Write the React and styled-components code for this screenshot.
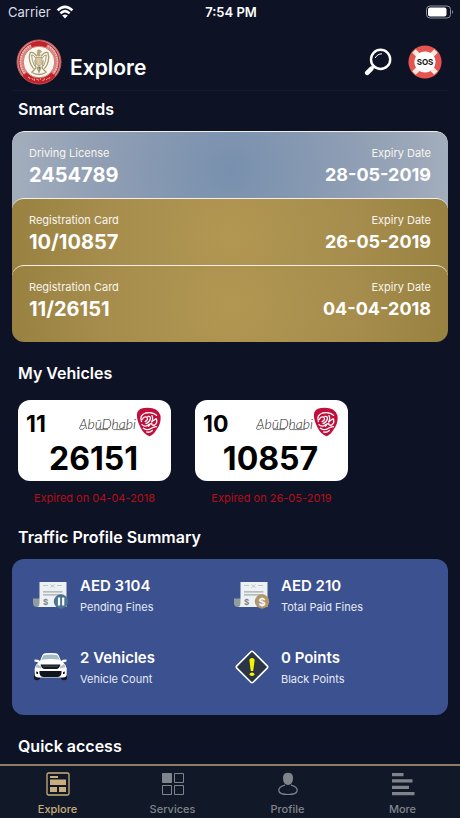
import React, { useState } from 'react'
import styled, { createGlobalStyle } from 'styled-components';

const cards = [
  { type: "Driving License", number: "2454789", expiry: "28-05-2019", color: "silver" },
  { type: "Registration Card", number: "10/10857", expiry: "26-05-2019", color: "gold" },
  { type: "Registration Card", number: "11/26151", expiry: "04-04-2018", color: "gold" },
];

const vehicles = [
  { code: "11", number: "26151", expired: "04-04-2018" },
  { code: "10", number: "10857", expired: "26-05-2019" },
];

const WifiIcon = () => (
  <svg width="18" height="14" viewBox="0 0 18 14" fill="none" stroke="#fff" strokeWidth="2.6">
    <path d="M1.6 5.4Q9-1.6 16.4 5.4" />
    <path d="M4.4 8.4Q9 4 13.6 8.4" />
    <path d="M9 13.4 6.2 10.6Q9 8.2 11.8 10.6Z" fill="#fff" stroke="none" />
  </svg>
)

const BatteryIcon = () => (
  <svg width="28" height="14" viewBox="0 0 28 14">
    <rect x="0.5" y="1" width="24" height="12" rx="3.5" fill="none" stroke="#8d909b" />
    <rect x="2" y="2.5" width="18.5" height="9" rx="2" fill="#fff" />
    <path d="M26 5q2 2 0 4z" fill="#8d909b" />
  </svg>
)

const Crest = () => (
  <svg width="46" height="46" viewBox="0 0 46 46" fill="none">
    <circle cx="23" cy="23" r="22" fill="#d98584" stroke="#b7605b" />
    <circle cx="23" cy="23" r="20" stroke="#b9292f" strokeWidth="1" />
    <circle cx="23" cy="23" r="18.5" stroke="#f0c3bf" strokeWidth="1.6" strokeDasharray="1.4 1" />
    <path d="M14 4.6Q23-.6 32 4.6L29.5 9.6Q23 6.5 16.5 9.6Z" fill="#c3222a" />
    <path d="M8.6 35.2A19.3 19.3 0 0 0 37.4 35.2" stroke="#c3222a" strokeWidth="6" />
    <path d="M12 38.4q1.6-.6 2 1.6m1.8-.8 1.6 2m1-1.8v2.4m2-1.4q2-1 2 1.2m2-.8v-1.6m2 2.2q2 .4 2-2m1.6 1.4 1.6-1.2m1 .4 1.4-2" stroke="#f1bfb6" strokeWidth=".9" />
    <circle cx="23" cy="23" r="15.8" fill="#fbf7ee" stroke="#cd7770" />
    <g stroke="#a89a70" strokeLinecap="round">
      <path d="M21.5 11.5q1.5-1.6 3 0l1.2 1.5-2 .4.4 3-1.2 1-1.4-1-.2-3z" fill="#b5a67a" strokeWidth=".6" />
      <path d="M20.8 17q-3.6-4.8-6.6-3.4-1.6 3.8-.4 8.8.8 3.6 3.4 6.8M25.2 17q3.6-4.8 6.6-3.4 1.6 3.8.4 8.8-.8 3.6-3.4 6.8" strokeWidth="1.3" />
      <path d="M19.8 19q-2.2-3.4-4.2-3 .2 6 3 11M26.2 19q2.2-3.4 4.2-3-.2 6-3 11M18.8 21.5l1 8M27.2 21.5l-1 8" strokeWidth="1" />
      <path d="M20 18.5h6v6q-3 4.6-6 0z" fill="#d5c9a5" strokeWidth=".8" />
      <path d="M21 28 23 33l2-5M19.4 29.5l-3.6 3.7M26.6 29.5l3.6 3.7M17 34q6 3 12 0" strokeWidth="1.3" />
      <path d="M22 27.4h2.2l-1 4.4z" fill="#6f7351" stroke="none" />
    </g>
  </svg>
)

const SearchIcon = () => (
  <svg width="28" height="28" viewBox="0 0 28 28" fill="none" stroke="#fff" strokeLinecap="round">
    <circle cx="16.6" cy="11.4" r="9.6" strokeWidth="2.4" />
    <path d="M9.6 18.4 7.8 20.2" strokeWidth="2.4" />
    <path d="M7.4 20.6 3.2 24.8" strokeWidth="4.6" />
    <path d="M11.4 9.6Q13.4 5.8 17.6 5.8" strokeWidth="1" />
  </svg>
)

const SosIcon = () => (
  <svg width="34" height="34" viewBox="0 0 34 34">
    <circle cx="17" cy="17" r="16.6" fill="#e6544f" />
    <path d="M6 6 28 28M28 6 6 28" stroke="#fbe9e0" strokeWidth="5" />
    <circle cx="17" cy="17" r="10.6" fill="#fff" />
    <text x="17" y="20" textAnchor="middle" fontFamily="Inter, sans-serif" fontWeight="700" fontSize="8" fill="#111">SOS</text>
  </svg>
)

const AbuDhabiLogo = () => (
  <svg width="82" height="30" viewBox="0 0 82 30" fill="none">
    <text x="0" y="22" fontFamily="Lato, sans-serif" fontStyle="italic" fontWeight="300" fontSize="14" fill="#222">AbūDhabi</text>
    <path d="M1 22.5q3 .4 5-2M17 22.6h12M34 22.6h15" stroke="#555" strokeWidth=".8" />
    <path d="M58.4 5.2Q60 .8 69 .8q9.600 0 12.400 7.400 1.200 7.600-3.600 14-3.400 5.800-7.200 7-5.600-1.600-9.200-9Q56.600 10.600 58.400 5.200Z" fill="#c00f3c" />
    <g stroke="#fff" strokeWidth="1.300" strokeLinecap="round">
      <path d="M62.400 14.600Q60.200 8 66.600 6q7-1.600 11 2.400M63.200 12.500q1.600-3.600 4.600-2.300 2 2.400-1.600 4.400M69 9.400q2.600-.6 2.400 2.200-.6 3.400-4.400 5M73 8.600q1.600 4-.6 6.400l4.600-3.200M77.400 12q1.400 4-2 6.200-3.400.4-2.600-2.200M63 17.600q3.400 3.400 7.200-.4M64.400 21.200q4 2.800 8 0 2.800-1.800 5-1.600M67.600 25q2.800 1 5.800-1.600M69.600 19.200l1.800-2.600" />
    </g>
  </svg>
)

const FinesIcon = ({ paid }) => (
  <svg width="36" height="30" viewBox="0 0 36 30" fill="none">
    <path d="M0 18.500h8V27H4q-4 0-4-4z" fill="#929d9f" />
    <path d="M6.500 2h27v25h-29q2-1 2-4z" fill="#eef1f3" />
    <path d="M10 5.500h5M24 5.500h5M17.500 4.500l4 3m0-3-4 3" stroke="#bfc6c9" />
    <path d="M10 11.800h19.500M10 14.800h19.500" stroke="#a4aaad" strokeWidth="1.200" />
    <text x="10" y="25" fontFamily="Inter, sans-serif" fontWeight="700" fontSize="8" fill="#7b8489">$</text>
    <circle cx="28" cy="21.500" r="7.200" fill={paid ? "#b1966b" : "#4b7490"} />
    {paid
      ? <text x="28" y="25.500" textAnchor="middle" fontFamily="Inter, sans-serif" fontWeight="700" fontSize="11" fill="#fff">$</text>
      : <path d="M26 17.500v8M30.200 17.500v8" stroke="#fff" strokeWidth="2.200" />}
  </svg>
)

const CarIcon = () => (
  <svg width="36" height="30" viewBox="0 0 36 30">
    <path d="M1 21h6v6q-3 2.400-6 0zM28 21h6v6q-3 2.400-6 0z" fill="#11161d" />
    <path d="M1.500 7.500 5 7.800 7 9 9.200 3.500Q10 1.500 12 1.300q5.500-.8 11 0 2 .2 2.800 2.200L28 9l2-1.200 3.500-.3v2l-3.400 1q3.400 2.500 3.600 6v6q0 3-4 3h-24q-4 0-4-3v-6q.2-3.500 3.600-6l-3.800-1z" fill="#fff" />
    <path d="M8.400 7.700 10.500 3.300q7-1.600 14 0l2.100 4.400q-9-1.200-18.200 0z" fill="#a6bcc5" />
    <path d="M2.200 15.200 4 12l4 2.500v2zM32.800 15.200 31 12l-4 2.500v2z" fill="#b9c0c5" />
    <path d="M7.500 12.500h20q-1.200 4.200-3.500 4.500H11q-2.300-.3-3.500-4.500z" fill="#151b22" />
    <path d="M6.500 19h22v2.500q-1 3.500-4 3.500h-14q-3 0-4-3.500zM3 19.500l2 .5v2H3.500zM32 19.500l-2 .5v2h1.500z" fill="#11161d" />
    <path d="M10 14.200h15" stroke="#59616a" strokeWidth=".7" />
  </svg>
)

const WarningIcon = () => (
  <svg width="36" height="36" viewBox="0 0 36 36">
    <rect x="6.500" y="6.500" width="23" height="23" rx="1.500" transform="rotate(45 18 18)" fill="#2c3546" stroke="#fff" strokeWidth="1.600" />
    <path d="M15.400 11.500q0-2.500 2.600-2.500t2.600 2.500L19.200 22h-2.400z" fill="#f6f500" />
    <ellipse cx="18" cy="25.200" rx="2.400" ry="1.800" fill="#f6f500" />
  </svg>
)

const ExploreIcon = () => (
  <svg width="24" height="24" viewBox="0 0 24 24" fill="currentColor">
    <rect x="1" y="1" width="22" height="22" rx="1.500" fill="none" stroke="currentColor" strokeWidth="1.300" />
    <path d="M4 4h8v2H4zM4 7.500h16V13H4zM4 15h7v5H4zM13 15h7v5h-7z" />
  </svg>
)

const ServicesIcon = () => (
  <svg width="24" height="24" viewBox="0 0 24 24" fill="none" stroke="currentColor">
    <path d="M1.500 1.500h9v9h-9z" fill="currentColor" />
    <path d="M13.500 1.500h9v9h-9zM1.500 13.500h9v9h-9zM13.500 13.500h9v9h-9z" />
  </svg>
)

const ProfileIcon = () => (
  <svg width="24" height="24" viewBox="0 0 24 24" fill="none" stroke="currentColor">
    <path d="M12 .8q5 0 5 5.200 0 7-5 7T7 6Q7 .8 12 .8z" fill="currentColor" stroke="none" />
    <path d="M9 13.200Q3 14.600 2.800 18.400 3 22.500 12 22.500t9.200-4.100Q21 14.600 15 13.200" strokeWidth="1.200" />
  </svg>
)

const MoreIcon = () => (
  <svg width="24" height="24" viewBox="0 0 24 24" fill="currentColor">
    <path d="M1 1h11.500v3.200H1zM1 7.300h20.500v3.200H1zM1 13.700h17v3.200H1zM1 20h22.500v3.200H1z" />
  </svg>
)

const summary = [
  { icon: <FinesIcon />, value: "AED 3104", label: "Pending Fines" },
  { icon: <FinesIcon paid />, value: "AED 210", label: "Total Paid Fines" },
  { icon: <CarIcon />, value: "2 Vehicles", label: "Vehicle Count" },
  { icon: <WarningIcon />, value: "0 Points", label: "Black Points" },
];

const tabs = [
  { name: "Explore", icon: <ExploreIcon /> },
  { name: "Services", icon: <ServicesIcon /> },
  { name: "Profile", icon: <ProfileIcon /> },
  { name: "More", icon: <MoreIcon /> },
];

const App = () => {

  const [activeTab, setActiveTab] = useState("Explore");

  return (
    <Page>
      <GlobalStyle />
      <StatusBar>
        <div className='carrier'>Carrier <WifiIcon /></div>
        <strong>7:54 PM</strong>
        <div className='battery'><BatteryIcon /></div>
      </StatusBar>
      <Header>
        <Crest />
        <h1>Explore</h1>
        <IconButton aria-label='Search'><SearchIcon /></IconButton>
        <IconButton aria-label='SOS'><SosIcon /></IconButton>
      </Header>
      <main>
        <SectionTitle>Smart Cards</SectionTitle>
        <CardStack>
          {cards.map((card) => (
            <SmartCard key={card.number} $color={card.color}>
              <div>
                <CardLabel>{card.type}</CardLabel>
                <CardNumber>{card.number}</CardNumber>
              </div>
              <div className='expiry'>
                <CardLabel>Expiry Date</CardLabel>
                <CardDate>{card.expiry}</CardDate>
              </div>
            </SmartCard>
          ))}
        </CardStack>
        <SectionTitle>My Vehicles</SectionTitle>
        <VehicleList>
          {vehicles.map((vehicle) => (
            <Vehicle key={vehicle.number}>
              <Plate>
                <div className='plate-top'>
                  <span>{vehicle.code}</span>
                  <AbuDhabiLogo />
                </div>
                <div className='plate-number'>{vehicle.number}</div>
              </Plate>
              <Expired>Expired on {vehicle.expired}</Expired>
            </Vehicle>
          ))}
        </VehicleList>
        <SectionTitle>Traffic Profile Summary</SectionTitle>
        <SummaryPanel>
          {summary.map((item) => (
            <SummaryItem key={item.label}>
              <div className='icon'>{item.icon}</div>
              <div>
                <div className='value'>{item.value}</div>
                <div className='label'>{item.label}</div>
              </div>
            </SummaryItem>
          ))}
        </SummaryPanel>
        <SectionTitle>Quick access</SectionTitle>
      </main>
      <TabBar>
        {tabs.map((tab) => (
          <Tab key={tab.name} $active={activeTab === tab.name} onClick={() => setActiveTab(tab.name)}>
            {tab.icon}
            {tab.name}
          </Tab>
        ))}
      </TabBar>
    </Page>
  )
}

const GlobalStyle = createGlobalStyle`
  * {
    box-sizing: border-box;
  }
  body {
    margin: 0;
    background: #0d1224;
    font-family: Inter, "Liberation Sans", sans-serif;
  }
  h1, h2, p {
    margin: 0;
  }
  svg {
    display: block;
    flex-shrink: 0;
  }
`

const Page = styled.div`
  min-height: 100vh;
  display: flex;
  flex-direction: column;
  background: #0d1224;
  color: #fff;
`

const StatusBar = styled.div`
  display: grid;
  grid-template-columns: 1fr auto 1fr;
  align-items: center;
  height: 24px;
  padding: 0 6px 0 8px;
  font-size: 13px;
  line-height: 16px;
  .carrier {
    display: flex;
    align-items: center;
    gap: 5px;
    color: #dcdee4;
  }
  strong {
    font-weight: 600;
  }
  .battery {
    justify-self: end;
  }
`

const Header = styled.header`
  display: flex;
  align-items: center;
  height: 67px;
  margin: 0 12px;
  padding: 10px 6px 0 4px;
  border-bottom: 1px solid #171a28;
  h1 {
    flex: 1;
    padding: 12px 0 0 8px;
    font-size: 21px;
    line-height: 28px;
    font-weight: 600;
  }
`

const IconButton = styled.button`
  padding: 0;
  margin-left: 16px;
  border: 0;
  background: none;
  cursor: pointer;
`

const SectionTitle = styled.h2`
  padding: 0 18px;
  font-size: 16px;
  line-height: 36px;
  font-weight: 600;
`

const CardStack = styled.div`
  margin: 4px 12px 13px;
  overflow: hidden;
  border-radius: 12px;
`

const SmartCard = styled.div`
  display: flex;
  justify-content: space-between;
  height: 77px;
  padding: 13px 17px 0;
  border-top: 1px solid #f3efe6;
  border-radius: 12px 12px 0 0;
  background: ${({ $color }) => $color === "gold"
    ? "radial-gradient(circle 230px at center, #b29752 0%, #a68d4d 55%, #97803f 100%)"
    : "radial-gradient(circle 230px at center, #7890ae 0%, #8f9eb4 55%, #a5afbd 100%)"};
  & + & {
    margin-top: -10px;
  }
  .expiry {
    text-align: right;
  }
`

const CardLabel = styled.div`
  font-size: 11px;
  line-height: 16px;
  color: #f8f5ee;
`

const CardNumber = styled.div`
  padding-top: 2px;
  font-size: 20px;
  line-height: 24px;
  font-weight: 700;
`

const CardDate = styled(CardNumber)`
  font-size: 18px;
`

const VehicleList = styled.div`
  display: flex;
  flex-wrap: wrap;
  gap: 24px;
  padding: 9px 18px 0;
`

const Vehicle = styled.div`
  width: 153px;
`

const Plate = styled.div`
  height: 81px;
  border-radius: 12px;
  padding: 7px 10px 0 8px;
  background: #fff;
  color: #000;
  font-weight: 700;
  .plate-top {
    display: flex;
    justify-content: space-between;
    font-size: 23px;
    line-height: 34px;
  }
  .plate-number {
    font-size: 32px;
    line-height: 36px;
    text-align: center;
  }
`

const Expired = styled.p`
  padding: 9px 0 13px;
  font-size: 11px;
  line-height: 16px;
  text-align: center;
  color: #b80d18;
`

const SummaryPanel = styled.div`
  display: grid;
  grid-template-columns: 201px 1fr;
  row-gap: 30px;
  margin: 4px 12px 13px;
  padding: 15px 21px 27px;
  border-radius: 12px;
  background: #3c5190;
`

const SummaryItem = styled.div`
  display: flex;
  gap: 11px;
  .icon {
    width: 36px;
    height: 42px;
    display: flex;
    align-items: center;
    justify-content: center;
  }
  .value {
    font-size: 15px;
    line-height: 24px;
    font-weight: 600;
  }
  .label {
    font-size: 11px;
    line-height: 18px;
    color: #e6eaf5;
  }
`

const TabBar = styled.nav`
  position: sticky;
  bottom: 0;
  margin-top: auto;
  display: grid;
  grid-template-columns: repeat(4, 1fr);
  height: 54px;
  border-top: 2px solid #8e7c62;
  background: #111827;
`

const Tab = styled.button`
  display: flex;
  flex-direction: column;
  align-items: center;
  gap: 5px;
  padding: 6px 0 0;
  border: 0;
  background: none;
  font-family: inherit;
  font-size: 11px;
  line-height: 16px;
  font-weight: 500;
  color: ${({ $active }) => $active ? "#c8ae7c" : "#80858c"};
  cursor: pointer;
`

export default App
